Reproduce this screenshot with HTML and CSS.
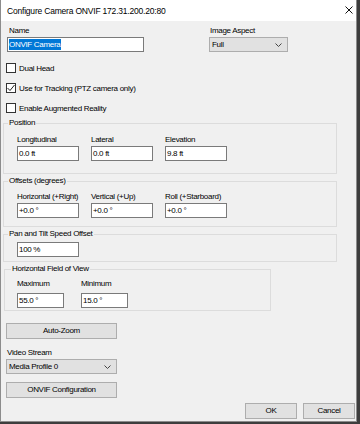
FILE: index.html
```html
<!DOCTYPE html>
<html lang="en">
<head>
    <meta charset="UTF-8">
    <meta name="viewport" content="width=device-width, initial-scale=1.0">
    <title>Configure Camera ONVIF</title>
    <link rel="stylesheet" href="styles.css">
</head>
<body>
    <div class="window">
        <div class="titlebar">
            <span class="title">Configure Camera ONVIF 172.31.200.20:80</span>
            <svg class="close-icon" width="8" height="8" viewBox="0 0 8 8">
                <path d="M0.5 0.5 L7.5 7.5 M7.5 0.5 L0.5 7.5" stroke="#111" stroke-width="1" fill="none"/>
            </svg>
        </div>
        <div class="content">
            <div class="top-row">
                <div class="field name-field">
                    <label class="name-label">Name</label>
                    <div class="textbox"><span class="selected">ONVIF Camera</span></div>
                </div>
                <div class="field aspect-field">
                    <label class="aspect-label">Image Aspect</label>
                    <div class="combo">
                        <span>Full</span>
                        <svg class="chevron" width="7" height="4" viewBox="0 0 7 4"><path d="M0.5 0.5 L3.5 3.5 L6.5 0.5" stroke="#444" fill="none"/></svg>
                    </div>
                </div>
            </div>

            <div class="check-list">
                <div class="check-row"><span class="checkbox"></span>Dual Head</div>
                <div class="check-row">
                    <span class="checkbox">
                        <svg width="8" height="8" viewBox="0 0 8 8"><path d="M0.5 4 L3 6.5 L7.5 1" stroke="#222" fill="none"/></svg>
                    </span>Use for Tracking (PTZ camera only)
                </div>
                <div class="check-row"><span class="checkbox"></span>Enable Augmented Reality</div>
            </div>

            <fieldset class="group">
                <legend>Position</legend>
                <div class="group-body grid-3 pad-position">
                    <div class="field"><label>Longitudinal</label><div class="textbox">0.0 ft</div></div>
                    <div class="field"><label>Lateral</label><div class="textbox">0.0 ft</div></div>
                    <div class="field"><label>Elevation</label><div class="textbox">9.8 ft</div></div>
                </div>
            </fieldset>

            <fieldset class="group">
                <legend>Offsets (degrees)</legend>
                <div class="group-body grid-3 pad-offsets">
                    <div class="field"><label>Horizontal (+Right)</label><div class="textbox">+0.0 °</div></div>
                    <div class="field"><label>Vertical (+Up)</label><div class="textbox">+0.0 °</div></div>
                    <div class="field"><label>Roll (+Starboard)</label><div class="textbox">+0.0 °</div></div>
                </div>
            </fieldset>

            <fieldset class="group">
                <legend>Pan and Tilt Speed Offset</legend>
                <div class="group-body pad-speed">
                    <div class="textbox speed-box">100 %</div>
                </div>
            </fieldset>

            <fieldset class="group fov-group">
                <legend>Horizontal Field of View</legend>
                <div class="group-body grid-2 pad-fov">
                    <div class="field"><label>Maximum</label><div class="textbox">55.0 °</div></div>
                    <div class="field"><label>Minimum</label><div class="textbox">15.0 °</div></div>
                </div>
            </fieldset>

            <div class="button wide-button auto-zoom">Auto-Zoom</div>

            <label class="stream-label">Video Stream</label>
            <div class="combo stream-combo">
                <span>Media Profile 0</span>
                <svg class="chevron" width="7" height="4" viewBox="0 0 7 4"><path d="M0.5 0.5 L3.5 3.5 L6.5 0.5" stroke="#444" fill="none"/></svg>
            </div>

            <div class="button wide-button onvif-config">ONVIF Configuration</div>

            <div class="dialog-buttons">
                <div class="button small-button">OK</div>
                <div class="button small-button">Cancel</div>
            </div>
        </div>
    </div>
</body>
</html>
```

FILE: styles.css
```css
html {
    background-color: #3d3d3d;
}
body {
    margin: 0;
    font-family: 'Liberation Sans', Arial, sans-serif;
    font-size: 8px;
    letter-spacing: -0.3px;
    color: #000;
}
.window {
    box-sizing: border-box;
    width: 357px;
    height: 422px;
    background-color: #f0f0f0;
    border-left: 1px solid #8c8c8c;
    border-right: 1px solid #8c8c8c;
    border-bottom: 1px solid #8c8c8c;
}
.titlebar {
    display: flex;
    align-items: center;
    justify-content: space-between;
    height: 21px;
    padding: 0 3px 0 6px;
    background-color: #fff;
}
.title {
    font-size: 8.5px;
    letter-spacing: -0.2px;
}
.close-icon {
    margin-top: -1px;
}
.content {
    padding: 5px 0 0 2px;
}
label {
    display: block;
    line-height: 10px;
    height: 10px;
    white-space: nowrap;
}
.field label {
    margin-bottom: 1px;
}
.top-row {
    display: flex;
    gap: 65px;
    margin-left: 4px;
}
.name-field {
    width: 137px;
}
.name-label {
    padding-left: 2px;
}
.aspect-field {
    width: 79px;
}
.aspect-label {
    padding-left: 1px;
}
.textbox {
    box-sizing: border-box;
    height: 15px;
    line-height: 13px;
    padding-left: 1px;
    background-color: #fff;
    border: 1px solid #7a7a7a;
    white-space: nowrap;
}
.selected {
    background-color: #0078d7;
    color: #fff;
    padding: 1px 0;
}
.combo {
    box-sizing: border-box;
    display: flex;
    align-items: center;
    justify-content: space-between;
    height: 15px;
    padding: 0 5px 0 2px;
    background-color: #e1e1e1;
    border: 1px solid #adadad;
}
.check-list {
    margin: 6px 0 0 3px;
}
.check-row {
    display: flex;
    align-items: center;
    height: 20px;
}
.checkbox {
    box-sizing: border-box;
    display: flex;
    align-items: center;
    justify-content: center;
    width: 10px;
    height: 10px;
    margin-right: 3px;
    background-color: #fff;
    border: 1px solid #333;
}
.group {
    width: 334px;
    box-sizing: border-box;
    margin: 2px 0 0 0;
    padding: 0;
    border: 1px solid #dcdcdc;
}
.group:first-of-type {
    margin-top: 0;
}
.group legend {
    line-height: 10px;
    padding: 0 1px;
    margin-left: 4px;
}
.grid-3 {
    display: grid;
    grid-template-columns: repeat(3, 62px);
    column-gap: 12px;
}
.grid-2 {
    display: grid;
    grid-template-columns: repeat(2, 47px);
    column-gap: 17px;
}
.pad-position {
    padding: 7px 0 12px 13px;
}
.pad-offsets {
    padding: 6px 0 8px 13px;
}
.pad-speed {
    padding: 3px 0 4px 13px;
}
.speed-box {
    width: 62px;
}
.fov-group {
    width: 267px;
    margin-left: 1px;
}
.fov-group legend {
    margin-left: 6px;
}
.pad-fov {
    padding: 5px 0 2px 12px;
}
.pad-fov label {
    margin-bottom: 4px;
}
.button {
    box-sizing: border-box;
    height: 16px;
    line-height: 14px;
    text-align: center;
    background-color: #e1e1e1;
    border: 1px solid #adadad;
}
.wide-button {
    width: 111px;
    margin-left: 3px;
}
.auto-zoom {
    margin-top: 12px;
}
.stream-label {
    margin: 9px 0 1px 4px;
}
.stream-combo {
    width: 111px;
    margin-left: 3px;
}
.onvif-config {
    margin-top: 8px;
}
.dialog-buttons {
    display: flex;
    justify-content: flex-end;
    gap: 6px;
    margin-top: 5px;
    padding-right: 1px;
}
.small-button {
    width: 52px;
}
```
